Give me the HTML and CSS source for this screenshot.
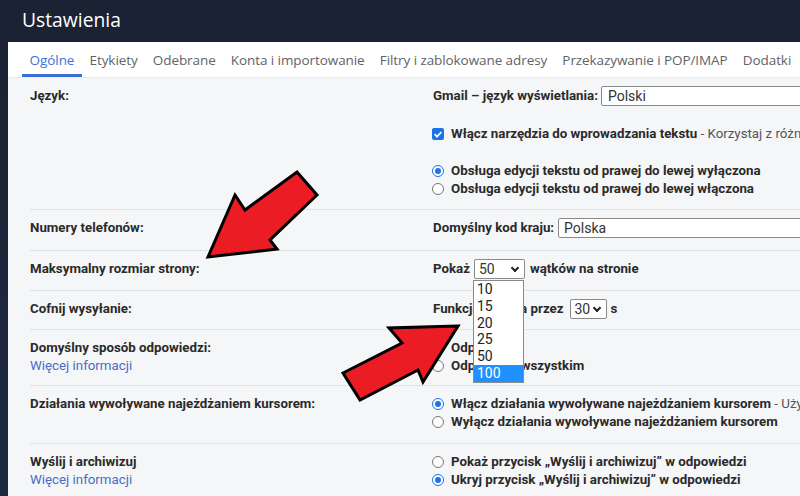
FILE: index.html
```html
<!DOCTYPE html>
<html lang="pl">
<head>
<meta charset="utf-8">
<title>Ustawienia</title>
<link rel="stylesheet" href="styles.css">
</head>
<body>
<div class="page">
  <header class="header">Ustawienia</header>
  <div class="panel">
    <nav class="tabs">
      <span class="tab active">Ogólne</span>
      <span class="tab">Etykiety</span>
      <span class="tab">Odebrane</span>
      <span class="tab">Konta i importowanie</span>
      <span class="tab">Filtry i zablokowane adresy</span>
      <span class="tab">Przekazywanie i POP/IMAP</span>
      <span class="tab">Dodatki</span>
    </nav>
    <div class="rows">
      <div class="row r1">
        <div class="label"><b>Język:</b></div>
        <div class="value">
          <div class="line"><b>Gmail – język wyświetlania:</b><span class="select wide">Polski</span></div>
          <div class="line gap1"><span class="check"><svg viewBox="0 0 12 12" width="12" height="12"><rect width="12" height="12" rx="2" fill="#1a73e8"/><path d="M2.6 6.2l2.4 2.4 4.4-4.6" fill="none" stroke="#fff" stroke-width="1.8"/></svg></span><b>Włącz narzędzia do wprowadzania tekstu</b><span class="muted">&nbsp;- Korzystaj z różnych klawiatur</span></div>
          <div class="line gap2"><span class="radio on"></span><b>Obsługa edycji tekstu od prawej do lewej wyłączona</b></div>
          <div class="line"><span class="radio"></span><b>Obsługa edycji tekstu od prawej do lewej włączona</b></div>
        </div>
      </div>
      <div class="row r2">
        <div class="label"><b>Numery telefonów:</b></div>
        <div class="value">
          <div class="line"><b>Domyślny kod kraju:</b><span class="select wide country">Polska</span></div>
        </div>
      </div>
      <div class="row r3">
        <div class="label"><b>Maksymalny rozmiar strony:</b></div>
        <div class="value">
          <div class="line"><b>Pokaż</b><span class="select small">50<i class="chev"></i></span><b>wątków na stronie</b></div>
        </div>
      </div>
      <div class="row r4">
        <div class="label"><b>Cofnij wysyłanie:</b></div>
        <div class="value">
          <div class="line"><b>Funkcja cofania przez</b><span class="select tiny">30<i class="chev"></i></span><b>s</b></div>
        </div>
      </div>
      <div class="row r5">
        <div class="label"><b>Domyślny sposób odpowiedzi:</b><a class="link">Więcej informacji</a></div>
        <div class="value">
          <div class="line"><span class="radio on"></span><b>Odpowiedz</b></div>
          <div class="line"><span class="radio"></span><b>Odpowiedz wszystkim</b></div>
        </div>
      </div>
      <div class="row r6">
        <div class="label"><b>Działania wywoływane najeżdżaniem kursorem:</b></div>
        <div class="value">
          <div class="line"><span class="radio on"></span><b>Włącz działania wywoływane najeżdżaniem kursorem</b><span class="muted">&nbsp;- Używaj działań</span></div>
          <div class="line"><span class="radio"></span><b>Wyłącz działania wywoływane najeżdżaniem kursorem</b></div>
        </div>
      </div>
      <div class="row r7">
        <div class="label"><b>Wyślij i archiwizuj</b><a class="link">Więcej informacji</a></div>
        <div class="value">
          <div class="line"><span class="radio"></span><b>Pokaż przycisk „Wyślij i archiwizuj” w odpowiedzi</b></div>
          <div class="line"><span class="radio on"></span><b>Ukryj przycisk „Wyślij i archiwizuj” w odpowiedzi</b></div>
        </div>
      </div>
    </div>
  </div>

  <ul class="dropdown">
    <li>10</li>
    <li>15</li>
    <li>20</li>
    <li>25</li>
    <li>50</li>
    <li class="hl">100</li>
  </ul>

  <svg class="arrows" viewBox="0 0 800 496" width="800" height="496">
    <polygon points="208,257 235,195 245,210 297,172 317,195 270,240 277,249" fill="#ec1c24" stroke="#000" stroke-width="3" stroke-linejoin="miter"/>
    <polygon points="458,326 389,328 402,343 343,373 360,400 418,370 423,382" fill="#ec1c24" stroke="#000" stroke-width="3" stroke-linejoin="miter"/>
  </svg>
</div>
</body>
</html>
```

FILE: styles.css
```css
* { box-sizing: border-box; }
html, body { margin: 0; padding: 0; }
body {
  width: 800px;
  height: 496px;
  overflow: hidden;
  background: #1c2537;
  font-family: Roboto, "Liberation Sans", Arial, sans-serif;
}
.page {
  position: relative;
  width: 800px;
  height: 496px;
  overflow: hidden;
  background: linear-gradient(180deg, #1a2233 0%, #1d2a40 100%);
}
.header {
  height: 42px;
  line-height: 40px;
  padding-left: 22px;
  color: #ffffff;
  font-family: "Open Sans", Roboto, sans-serif;
  font-size: 19.3px;
}
.panel {
  margin-left: 8px;
  width: 820px;
  height: 454px;
  background: #f5f6f7;
}
.tabs {
  display: flex;
  height: 36px;
  background: #ffffff;
  padding-left: 14px;
  white-space: nowrap;
  border-bottom: 1px solid #ececec;
}
.tab {
  padding: 0 7.6px;
  line-height: 36px;
  font-size: 13.5px;
  color: #5f6368;
  font-family: "Open Sans", Roboto, sans-serif;
  letter-spacing: -0.08px;
}
.tab.active {
  color: #3d6fd6;
  box-shadow: inset 0 -3px 0 #3d6fd6;
}
.rows {
  margin-left: 22px;
  font-size: 13.3px;
  color: #222;
}
.row {
  display: flex;
  border-top: 1px solid #e1e2e4;
  padding-top: 9px;
}
.row.r1 { border-top: none; height: 131px; }
.row.r2 { height: 41px; }
.row.r3 { height: 40px; }
.row.r4 { height: 39px; }
.row.r5 { height: 56px; }
.row.r6 { height: 58px; }
.row.r7 { height: 70px; }
.label {
  width: 403px;
  flex: none;
  line-height: 18px;
  display: flex;
  flex-direction: column;
}
.label b { font-weight: 700; color: #2a2a2a; }
.link {
  color: #4a6cc9;
  line-height: 18px;
}
.value {
  flex: 1;
  white-space: nowrap;
}
.line {
  display: flex;
  align-items: center;
  height: 18px;
  line-height: 18px;
}
.line b { font-weight: 700; color: #2a2a2a; }
.gap1 { margin-top: 20px; }
.gap2 { margin-top: 19px; }
.muted { color: #555; }
.check {
  width: 12px;
  height: 12px;
  margin: 0 7px 0 -1px;
  display: inline-flex;
}
.radio {
  width: 12px;
  height: 12px;
  border-radius: 50%;
  border: 1px solid #767676;
  background: #fff;
  margin: 0 7px 0 -1px;
  flex: none;
  position: relative;
}
.radio.on {
  border-color: #1a73e8;
}
.radio.on::after {
  content: "";
  position: absolute;
  left: 2px; top: 2px;
  width: 6px; height: 6px;
  border-radius: 50%;
  background: #1a73e8;
}
.select {
  display: inline-flex;
  align-items: center;
  height: 20px;
  border: 1px solid #8a8a8a;
  border-radius: 2px;
  background: #fff;
  padding-left: 6px;
  font-size: 14px;
  color: #333;
  position: relative;
  flex: none;
}
.select.wide { width: 300px; margin-left: 3px; }
.select.country { margin-left: 4px; padding-left: 5px; }
.select.small { width: 51px; margin: 0 5px 0 4px; padding-left: 4px; }
.select.tiny { width: 37px; margin: 0 4px 0 6px; padding-left: 4px; }
.chev {
  position: absolute;
  right: 6px;
  top: 5px;
  width: 6px;
  height: 6px;
  border-right: 2px solid #222;
  border-bottom: 2px solid #222;
  transform: rotate(45deg);
}
.dropdown {
  position: absolute;
  left: 473px;
  top: 280px;
  width: 51px;
  margin: 0;
  padding: 0;
  list-style: none;
  background: #fff;
  border: 1px solid #8a8a8a;
  font-size: 14px;
  color: #222;
}
.dropdown li {
  height: 16.8px;
  line-height: 16.8px;
  padding-left: 3px;
}
.dropdown li.hl {
  background: #1e90ff;
  color: #fff;
}
.arrows {
  position: absolute;
  left: 0;
  top: 0;
  pointer-events: none;
}
```
